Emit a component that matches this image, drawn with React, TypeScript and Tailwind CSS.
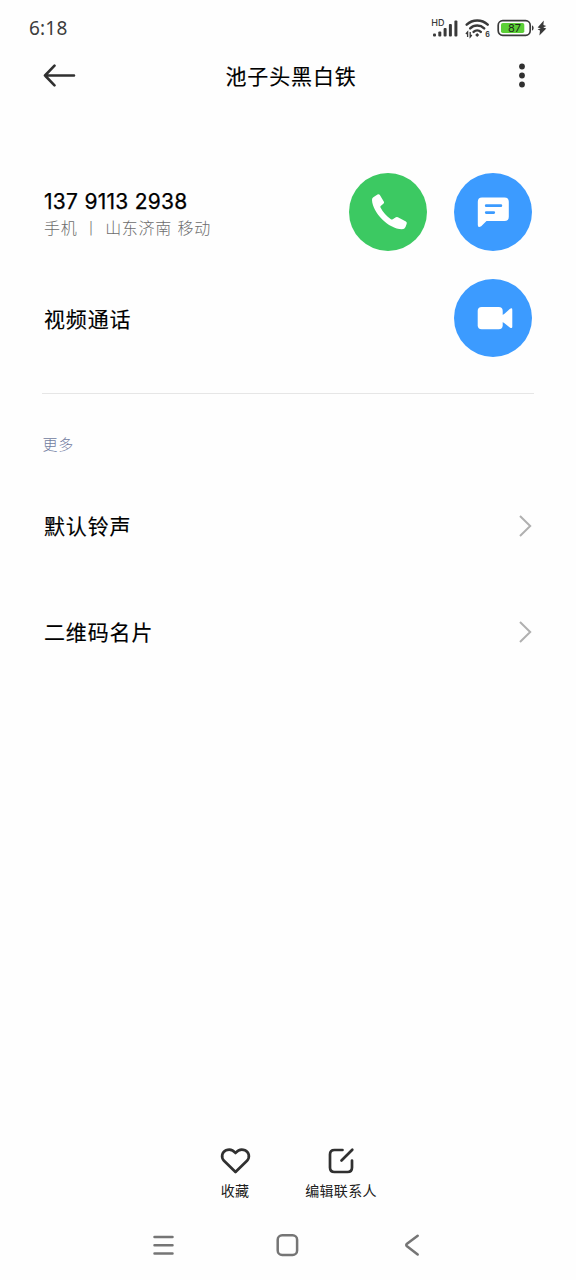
import type { ReactNode } from "react";

const LABEL =
  "text-[21px] font-normal tracking-[0.85px] text-black [-webkit-text-stroke:0.15px_black]";

function StatusBar() {
  return (
    <div className="flex h-12 items-center justify-between pt-2 pr-7 pl-[29px]">
      <span className="font-['Noto_Sans',sans-serif] text-[19px] leading-6 tracking-[0.2px] text-[#3c3c3c]">
        6:18
      </span>
      <div className="flex items-center text-[#3a3a3a]">
        <svg width="28" height="24" viewBox="0 0 28 24" fill="currentColor">
          <text
            x="0.3"
            y="9.5"
            fontSize="9"
            fontWeight="500"
            fontFamily="Inter, sans-serif"
          >
            HD
          </text>
          <rect x="2" y="17.5" width="3" height="3" rx="1" />
          <rect x="7.3" y="15.5" width="3" height="5" rx="1" />
          <rect x="12.6" y="12" width="3" height="8.5" rx="1" />
          <rect x="17.9" y="8" width="3" height="12.5" rx="1" />
          <rect x="23.4" y="4.5" width="3" height="16" rx="1" />
        </svg>
        <svg
          width="26"
          height="24"
          viewBox="0 0 26 24"
          fill="none"
          stroke="currentColor"
          className="ml-1.5"
        >
          <g strokeWidth="2.5" strokeLinecap="round">
            <path d="M1.7 8.6a15.4 15.4 0 0 1 21 0" />
            <path d="M5.2 12.4a10.2 10.2 0 0 1 14 0" />
            <path d="M8.6 15.9a5.3 5.3 0 0 1 7.2 0" />
          </g>
          <path d="m12.2 17-2 2.1 2 2 2-2z" fill="currentColor" stroke="none" />
          <path d="M2.6 21v-5l-1.7 2M5.2 16v5l1.6-2" strokeWidth="1.3" />
          <text
            x="20.2"
            y="21.2"
            fontSize="7"
            fontWeight="700"
            fontFamily="Inter, sans-serif"
            fill="currentColor"
            stroke="none"
          >
            6
          </text>
        </svg>
        <svg width="38" height="24" viewBox="0 0 38 24" className="ml-1.5">
          <rect
            x="1.2"
            y="4.7"
            width="32"
            height="14.6"
            rx="4.5"
            fill="none"
            stroke="#3a3a3a"
            strokeWidth="1.7"
          />
          <rect x="4" y="7" width="23.3" height="10" rx="1.8" fill="#5bcf36" />
          <path d="M35 9.5c2.2.4 2.2 4.6 0 5z" fill="#3a3a3a" />
          <text
            x="17.4"
            y="16"
            fontSize="11"
            textAnchor="middle"
            fontFamily="Inter, sans-serif"
            fill="#202b1b"
          >
            87
          </text>
        </svg>
        <svg
          width="10"
          height="16"
          viewBox="0 0 10 16"
          fill="currentColor"
          className="ml-0.5 mr-px"
        >
          <path d="M6.8.4.6 7.4l3.200.8L.6 9.600l2.400 1L2.400 15.600 9.300 8.500 6.200 7.600 9.300 5.900 6.400 5.100z" />
        </svg>
      </div>
    </div>
  );
}

function Header() {
  return (
    <header className="flex h-14 items-center pr-[50px] pl-[43px]">
      <svg
        width="33"
        height="24"
        viewBox="0 0 33 24"
        fill="none"
        stroke="#303030"
        strokeWidth="2.6"
        strokeLinecap="round"
        strokeLinejoin="round"
      >
        <path d="M11.5 1.7 2 11.5l9.5 9.8M2 11.5h29" />
      </svg>
      <h1 className={`ml-[149.5px] flex-1 ${LABEL}`}>池子头黑白铁</h1>
      <svg width="8" height="26" viewBox="0 0 8 26" fill="#303030">
        <circle cx="4" cy="3.5" r="2.9" />
        <circle cx="4" cy="12.5" r="2.9" />
        <circle cx="4" cy="21.5" r="2.9" />
      </svg>
    </header>
  );
}

function RoundButton({
  className,
  label,
  children,
}: {
  className: string;
  label: string;
  children: ReactNode;
}) {
  return (
    <button aria-label={label} className={`size-[78px] rounded-full ${className}`}>
      <svg width="78" height="78" viewBox="0 0 78 78" fill="#fff">
        {children}
      </svg>
    </button>
  );
}

function MoreRow({ label }: { label: string }) {
  return (
    <div className="flex h-[106px] items-center justify-between pr-11 pl-11">
      <span className={LABEL}>{label}</span>
      <svg
        width="14"
        height="24"
        viewBox="0 0 14 24"
        fill="none"
        stroke="#b0b0b0"
        strokeWidth="2"
      >
        <path d="M2 2l10.2 10L2 22" />
      </svg>
    </div>
  );
}

function BottomAction({ label, children }: { label: string; children: ReactNode }) {
  return (
    <button className="flex w-[106px] flex-col items-center">
      <svg
        width="32"
        height="30"
        viewBox="0 0 32 30"
        fill="none"
        stroke="#303030"
        strokeWidth="2.7"
        strokeLinecap="round"
        strokeLinejoin="round"
      >
        {children}
      </svg>
      <span className="mt-1 mb-px text-[14px] leading-5 tracking-[0.3px] whitespace-nowrap text-[#202020]">
        {label}
      </span>
    </button>
  );
}

function NavBar() {
  return (
    <nav className="flex h-[70px] items-center pl-[152px]">
      <svg
        width="22"
        height="24"
        viewBox="0 0 22 24"
        fill="none"
        stroke="#757575"
        strokeWidth="2.5"
        strokeLinecap="round"
      >
        <path d="M2.5 4h18M2.5 12.2h18M2.5 20.4h18" />
      </svg>
      <svg
        width="24"
        height="24"
        viewBox="0 0 24 24"
        fill="none"
        stroke="#757575"
        strokeWidth="2.5"
        className="ml-[101px]"
      >
        <rect x="2.7" y="2.3" width="19.4" height="19.6" rx="4.5" />
      </svg>
      <svg
        width="16"
        height="24"
        viewBox="0 0 16 24"
        fill="none"
        stroke="#757575"
        strokeWidth="2.5"
        strokeLinecap="round"
        strokeLinejoin="round"
        className="ml-[105px]"
      >
        <path d="M13.7 2.7 3 10.8q-1.5 1.2 0 2.4l10.7 8.3" />
      </svg>
    </nav>
  );
}

function App() {
  return (
    <div className="flex h-[1280px] w-[576px] flex-col bg-[#fefefe] font-['Noto_Sans_CJK_SC',sans-serif]">
      <StatusBar />
      <Header />

      <main className="flex-1 pt-[55px]">
        <section>
          <div className="flex h-[106px] items-center justify-between px-11">
            <div className="pt-[3px]">
              <div className="font-['Inter',sans-serif] text-[21px] leading-7 font-normal tracking-[0.27px] text-black [-webkit-text-stroke:0.25px_black]">
                137 9113 2938
              </div>
              <div className="-mt-px text-[16px] leading-6 font-light tracking-[0.7px] [word-spacing:1.3px] text-[#6c6c6c]">
                手机 丨 山东济南 移动
              </div>
            </div>
            <div className="flex gap-[27px]">
              <RoundButton className="bg-[#3cc962]" label="拨打电话">
                <path d="M24.3 24.2l4.2-2.6q1.6-.8 2.5.7l3.9 6.5q.5 1.1-.3 1.8l-2.9 2.4q-.7.7-.2 1.500c2.600 4.700 6 8.700 10.400 11.800q.9.600 1.800 0l3.200-2q1-.6 2 0l8 4.200q1.300.8.8 2.200l-1.200 3.300q-.9 2.200-3.600 2.300C39.500 56 23.500 39.500 23 27q0-2 1.300-2.800z" />
              </RoundButton>
              <RoundButton className="bg-[#3c9bff]" label="发送短信">
                <path d="M28 24.5h22.5q4.3 0 4.3 4.3v15q0 4.3-4.3 4.3H32.5l-5.3 5.1q-3.4 2-3.4-1.2V28.8q0-4.3 4.2-4.3z" />
                <path
                  d="M32.2 32.7h14.7M32.2 39.6h7.6"
                  stroke="#3c9bff"
                  strokeWidth="2.7"
                  strokeLinecap="round"
                />
              </RoundButton>
            </div>
          </div>
          <div className="flex h-[106px] items-center justify-between px-11">
            <span className={`pt-0.5 ${LABEL}`}>视频通话</span>
            <RoundButton className="bg-[#3c9bff]" label="视频通话">
              <rect x="23.7" y="28" width="25" height="22.3" rx="4" />
              <path d="M48 36q1.5-.3 2.5-1.3l5.3-4.8q2.5-1.5 2.5.8v17q0 2.3-2.5.8l-5.3-4.3q-1-1-2.5-1.3z" />
            </RoundButton>
          </div>
        </section>

        <div className="mx-[42px] mt-[22px] h-px bg-[#e6e6e6]" />

        <section className="pt-[38px]">
          <h2 className="mb-[17px] pl-[42.5px] text-[15px] leading-6 font-light tracking-[0.7px] text-[#707b9f]">
            更多
          </h2>
          <MoreRow label="默认铃声" />
          <MoreRow label="二维码名片" />
        </section>
      </main>

      <footer className="flex justify-center pb-[9px]">
        <BottomAction label="收藏">
          <path d="M16.5 26 5 14.8C1.7 11.2 3 6 7 4.3c3.5-1.5 7-.3 9.5 2.7 2.5-3 6-4.2 9.5-2.7 4 1.7 5.3 6.900 2 10.500z" />
        </BottomAction>
        <BottomAction label="编辑联系人">
          <path d="M17.5 4H9.5Q5 4 5 8.5v13Q5 26 9.5 26h13q4.5 0 4.5-4.5v-7M16.5 14.5 27.3 3.7" />
        </BottomAction>
      </footer>
      <NavBar />
    </div>
  );
}

export default App;
